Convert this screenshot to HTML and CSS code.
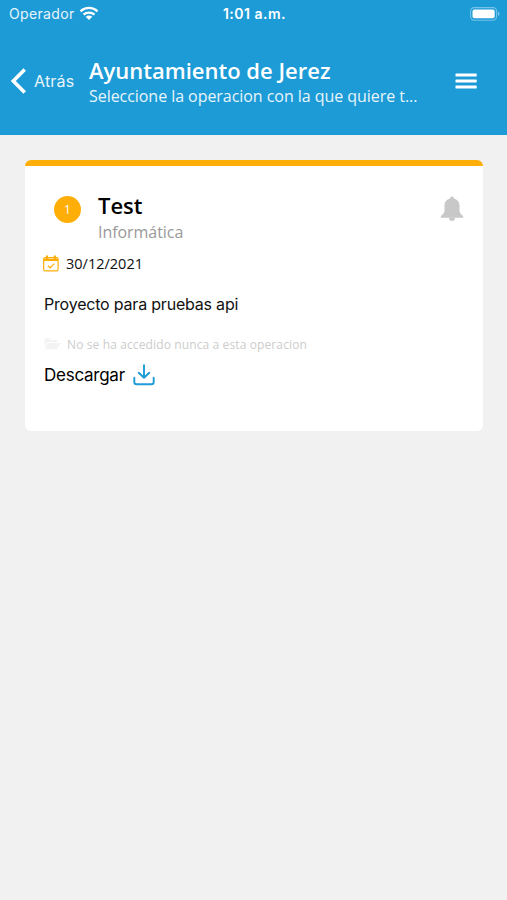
FILE: index.html
```html
<!DOCTYPE html>
<html lang="es">
<head>
<meta charset="UTF-8">
<meta name="viewport" content="width=device-width, initial-scale=1.0">
<title>Ayuntamiento de Jerez</title>
<link rel="stylesheet" href="styles.css">
</head>
<body>
<header class="header">
<div class="status-bar">
<div class="carrier">
<span class="carrier-name">Operador</span>
<svg class="wifi" width="20" height="15" viewBox="0 0 20 15" fill="none" stroke="#fff" stroke-width="2.3">
<path d="M1.5 5.3C6.3 0.7 13.7 0.7 18.5 5.3"/>
<path d="M4.5 8.7C7.6 5.8 12.4 5.8 15.5 8.7"/>
<path d="M10 14L6.7 10.8C8.6 9.1 11.4 9.1 13.3 10.8Z" fill="#fff" stroke="none"/>
</svg>
</div>
<span class="time">1:01 a.m.</span>
<svg class="battery" width="30" height="14" viewBox="0 0 30 14">
<rect x="0.6" y="0.6" width="26" height="12.6" rx="3.6" fill="none" stroke="#fff" stroke-opacity="0.4" stroke-width="1.1"/>
<rect x="2.5" y="2.5" width="22.2" height="8.8" rx="2" fill="#fff"/>
<path d="M28 4.8C30 5.5 30 8.3 28 9Z" fill="#fff" fill-opacity="0.45"/>
</svg>
</div>
<nav class="nav">
<a class="back">
<svg width="16" height="26" viewBox="0 0 16 26" fill="none" stroke="#fff" stroke-width="3.6">
<path d="M14.7 1.4L3.3 13L14.7 24.6"/>
</svg>
<span class="back-text">Atrás</span>
</a>
<div class="titles">
<h1 class="title">Ayuntamiento de Jerez</h1>
<p class="subtitle">Seleccione la operacion con la que quiere t...</p>
</div>
<svg class="menu" width="22" height="16" viewBox="0 0 22 16" fill="#fff">
<rect x="0.5" y="0.5" width="21.2" height="3" rx="0.5"/>
<rect x="0.5" y="6.5" width="21.2" height="3" rx="0.5"/>
<rect x="0.5" y="12.5" width="21.2" height="3" rx="0.5"/>
</svg>
</nav>
</header>
<main class="content">
<section class="card">
<div class="card-head">
<span class="badge">1</span>
<div class="card-titles">
<h2 class="name">Test</h2>
<p class="area">Informática</p>
</div>
<svg class="bell" width="24" height="26" viewBox="0 0 24 26" fill="#c8c8c8">
<path d="M12 0.6C13 0.6 13.8 1.4 13.9 2.4C17.4 3.3 19.5 6.1 19.5 9.6V14.5C19.5 16.5 20.4 17.8 23.2 20.2V21.7H0.8V20.2C3.6 17.8 4.5 16.5 4.5 14.5V9.6C4.5 6.1 6.6 3.3 10.1 2.4C10.2 1.4 11 0.6 12 0.6Z"/>
<path d="M8.9 21.7H15.1C14.9 23.8 13.7 25 12 25C10.3 25 9.1 23.8 8.9 21.7Z"/>
</svg>
</div>
<div class="row date-row">
<svg width="16" height="17" viewBox="0 0 16 17" fill="none" stroke="#ffae08" stroke-width="1.2">
<rect x="0.7" y="2.7" width="14.4" height="13.2" rx="1.6"/>
<path d="M0.7 3.6H15.1V6H0.7Z" fill="#ffae08" stroke="none"/>
<path d="M4 0.5V4M11.8 0.5V4" stroke-width="2.2"/>
<path d="M4.9 10.7L7.1 12.8L11.2 8.7"/>
</svg>
<span class="date">30/12/2021</span>
</div>
<p class="row description">Proyecto para pruebas api</p>
<div class="row access-row">
<svg width="17" height="12" viewBox="0 0 17 12" fill="#f3f3f3">
<path d="M0.5 9.2V1.6C0.5 0.9 0.9 0.5 1.6 0.5H5.5L7 2H12.3C13 2 13.4 2.4 13.4 3.1V4.2H4.2C3.5 4.2 3 4.5 2.6 5.1Z"/>
<path d="M4.2 5.1H15.8C16.3 5.1 16.5 5.5 16.2 5.9L13.5 10.5C13.3 10.9 12.9 11.2 12.4 11.2H1.5C0.9 11.2 0.7 10.8 1 10.4L3.4 5.6C3.6 5.3 3.8 5.1 4.2 5.1Z"/>
</svg>
<span class="access">No se ha accedido nunca a esta operacion</span>
</div>
<div class="row download-row">
<span class="download">Descargar</span>
<svg width="22" height="22" viewBox="0 0 22 22" fill="none" stroke="#1c9bd7" stroke-width="1.9" stroke-linecap="round" stroke-linejoin="round">
<path d="M11 1.2V13.5M5.8 8.7L11 13.8L16.2 8.7"/>
<path d="M1.3 13.7V18C1.3 19.5 2.2 20.3 3.6 20.3H18.4C19.8 20.3 20.7 19.5 20.7 18V13.7"/>
</svg>
</div>
</section>
</main>
</body>
</html>
```
FILE: styles.css
```css
* {
box-sizing: border-box;
}
body {
margin: 0;
min-height: 900px;
background-color: #f1f1f1;
font-family: "Open Sans", sans-serif;
white-space: nowrap;
}
h1, h2, p {
margin: 0;
}
svg {
display: block;
flex-shrink: 0;
}
.header {
height: 135px;
background-color: #1c9bd7;
color: #fff;
}
.status-bar {
display: grid;
grid-template-columns: 1fr auto 1fr;
align-items: center;
height: 27px;
padding: 0 7px 0 9px;
font-family: Inter, sans-serif;
}
.carrier {
display: flex;
align-items: center;
gap: 4px;
}
.carrier-name {
font-size: 14px;
letter-spacing: 0.35px;
opacity: 0.9;
}
.time {
font-size: 14px;
font-weight: 600;
letter-spacing: 0.5px;
}
.battery {
justify-self: end;
}
.nav {
display: flex;
align-items: center;
height: 107px;
padding: 0 30px 0 10px;
}
.back {
display: flex;
align-items: center;
gap: 8px;
width: 79px;
}
.back-text {
font-family: Inter, sans-serif;
font-size: 16px;
letter-spacing: 0.2px;
opacity: 0.9;
}
.titles {
flex: 1;
padding-top: 2px;
}
.title {
height: 28px;
font-size: 22px;
font-weight: 600;
line-height: 28px;
}
.subtitle {
height: 24px;
font-size: 16px;
letter-spacing: -0.05px;
line-height: 24px;
opacity: 0.9;
}
.content {
padding: 25px 24px 0 25px;
}
.card {
height: 271px;
padding: 26px 18px 0 18px;
border-top: 6px solid #ffae08;
border-radius: 6px;
background-color: #fff;
color: #111;
}
.card-head {
display: flex;
align-items: flex-start;
height: 57px;
}
.badge {
width: 27px;
height: 27px;
margin: 4px 17px 0 11px;
border-radius: 50%;
background-color: #ffae08;
color: #fff;
font-size: 12px;
line-height: 27px;
text-align: center;
}
.card-titles {
flex: 1;
}
.name {
height: 28px;
color: #000;
font-size: 22px;
font-weight: 600;
line-height: 27px;
}
.area {
height: 24px;
color: #999;
font-size: 16px;
letter-spacing: -0.05px;
line-height: 24px;
}
.bell {
margin: 4px 1px 0 0;
}
.row {
display: flex;
align-items: center;
}
.date-row {
gap: 7px;
height: 28px;
}
.date {
font-size: 14.5px;
}
.description {
height: 53px;
padding-left: 1px;
font-family: Inter, sans-serif;
font-size: 16px;
letter-spacing: -0.2px;
}
.access-row {
gap: 6px;
height: 28px;
padding-left: 1px;
}
.access {
color: #ccc;
font-size: 12px;
letter-spacing: 0.12px;
}
.download-row {
gap: 8px;
height: 34px;
padding-left: 1px;
}
.download {
color: #000;
font-family: Inter, sans-serif;
font-size: 17px;
letter-spacing: -0.25px;
}
```
